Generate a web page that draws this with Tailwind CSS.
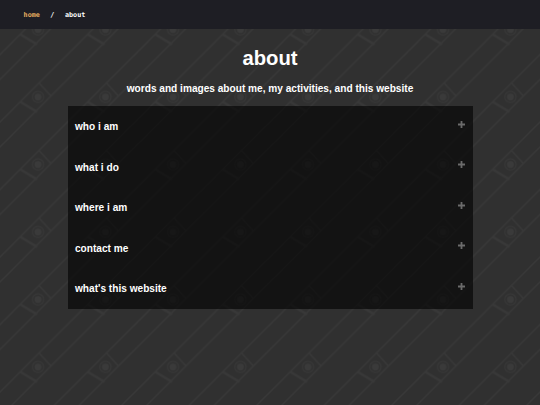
<!DOCTYPE html>
<html lang="en">
<head>
  <meta charset="UTF-8" />
  <meta name="viewport" content="width=device-width, initial-scale=1.0" />
  <title>about</title>
  <script src="https://cdn.jsdelivr.net/npm/@tailwindcss/browser@4"></script>
</head>
<body class="relative h-screen overflow-hidden bg-[#303030] text-white font-['Liberation_Sans',sans-serif] font-bold">
  <!-- page background -->
  <svg class="absolute inset-0 -z-10 h-full w-full" aria-hidden="true">
    <defs>
      <pattern id="tile" width="67.5" height="67.5" patternUnits="userSpaceOnUse">
        <g fill="none" stroke="#383838" stroke-width="1.4">
          <path d="M-3 15L15 -3M-3 57.5L57.5 -3M9 70.5L70.5 9M51.5 70.5L70.5 51.5" />
          <path d="M39 15.5L51 28.5" />
          <path d="M20.5 34.5L37 44.5" stroke-width="2.4" />
          <circle cx="38" cy="29.5" r="5.6" stroke-width="1" />
        </g>
        <circle cx="38" cy="29.5" r="3.4" fill="#3a3a3a" />
      </pattern>
    </defs>
    <rect width="100%" height="100%" fill="url(#tile)" />
  </svg>

  <nav class="flex h-[29px] items-center gap-[10.5px] bg-[#1e1e24] pt-px px-[23.6px] font-['DejaVu_Sans_Mono',monospace] text-[6.75px]">
    <a href="#" class="text-[#e6ae60]">home</a>
    <span>/</span>
    <span>about</span>
  </nav>

  <main class="mx-auto w-[405px]">
    <h1 class="pt-[17px] text-center text-[20.25px] leading-6">about</h1>
    <h2 class="pt-[13px] text-center text-[10.125px] leading-3">words and images about me, my activities, and this website</h2>

    <div class="mt-[11.4px] bg-black/60 px-[7.5px] text-[10.125px]">
      <div class="flex h-[40.5px] items-center justify-between">
        <span class="pt-[0.5px]">who i am</span>
        <svg class="mb-[5px] size-[7px]" viewBox="0 0 7 7"><path d="M3.5 0V7M0 3.5H7" stroke="#6b6b6b" stroke-width="1.8" /></svg>
      </div>
      <div class="flex h-[40.5px] items-center justify-between">
        <span class="pt-[0.5px]">what i do</span>
        <svg class="mb-[5px] size-[7px]" viewBox="0 0 7 7"><path d="M3.5 0V7M0 3.5H7" stroke="#6b6b6b" stroke-width="1.8" /></svg>
      </div>
      <div class="flex h-[40.5px] items-center justify-between">
        <span class="pt-[0.5px]">where i am</span>
        <svg class="mb-[5px] size-[7px]" viewBox="0 0 7 7"><path d="M3.5 0V7M0 3.5H7" stroke="#6b6b6b" stroke-width="1.8" /></svg>
      </div>
      <div class="flex h-[40.5px] items-center justify-between">
        <span class="pt-[0.5px]">contact me</span>
        <svg class="mb-[5px] size-[7px]" viewBox="0 0 7 7"><path d="M3.5 0V7M0 3.5H7" stroke="#6b6b6b" stroke-width="1.8" /></svg>
      </div>
      <div class="flex h-[40.5px] items-center justify-between">
        <span class="pt-[0.5px]">what's this website</span>
        <svg class="mb-[5px] size-[7px]" viewBox="0 0 7 7"><path d="M3.5 0V7M0 3.5H7" stroke="#6b6b6b" stroke-width="1.8" /></svg>
      </div>
    </div>
  </main>
</body>
</html>
